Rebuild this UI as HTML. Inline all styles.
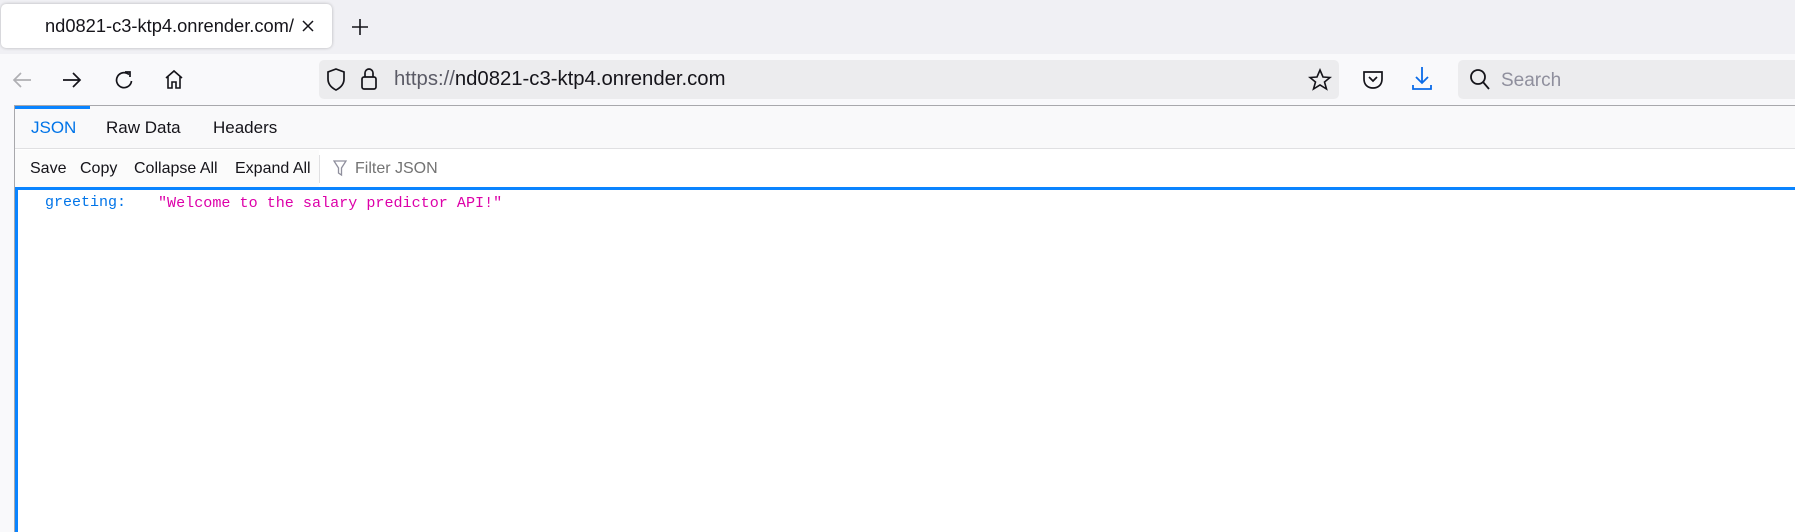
<!DOCTYPE html>
<html><head><meta charset="utf-8"><style>
*{margin:0;padding:0;box-sizing:border-box}
body{width:1795px;height:532px;overflow:hidden;background:#f9f9fb;font-family:"Liberation Sans",sans-serif;position:relative}
.a{position:absolute}
.tabs{left:0;top:0;width:1795px;height:54px;background:#f0f0f4}
.tab{left:1px;top:4px;width:331px;height:44px;background:#fff;border-radius:5px;box-shadow:0 0 3px rgba(0,0,0,.25)}
.t{font-size:17px;color:#15141a;white-space:nowrap}
.url{left:319px;top:60px;width:1020px;height:39px;background:#ececee;border-radius:5px}
.search{left:1458px;top:60px;width:337px;height:39px;background:#ececee;border-radius:5px 0 0 5px}
.panel{left:14px;top:105px;width:1781px;height:427px;background:#fff;border-top:1px solid #a8a8ac;border-left:1px solid #a8a8ac}
</style></head><body>
<div class="a tabs"></div>
<div class="a tab"></div>
<div class="a t" style="left:45px;top:15px;font-size:18.3px">nd0821-c3-ktp4.onrender.com/</div>
<svg class="a" style="left:302px;top:20px" width="12" height="12"><path d="M1 1L11 11M11 1L1 11" stroke="#15141a" stroke-width="1.5"/></svg>
<svg class="a" style="left:351px;top:18px" width="18" height="18"><path d="M9 1V17M1 9H17" stroke="#15141a" stroke-width="1.6"/></svg>
<svg class="a" style="left:12px;top:71px" width="20" height="18"><path d="M19 9H2M9 2L2 9L9 16" stroke="#b0b0b4" stroke-width="1.7" fill="none"/></svg>
<svg class="a" style="left:62px;top:71px" width="20" height="18"><path d="M1 9H18M11 2L18 9L11 16" stroke="#15141a" stroke-width="1.7" fill="none"/></svg>
<svg class="a" style="left:114px;top:70px" width="20" height="20"><path d="M15 4.5A7.5 7.5 0 1 0 17.5 11" stroke="#15141a" stroke-width="1.7" fill="none"/><path d="M11 2H16V7" stroke="#15141a" stroke-width="1.7" fill="none"/></svg>
<svg class="a" style="left:164px;top:69px" width="20" height="21"><path d="M2 9L10 2L18 9M4 7.5V19H8V13H12V19H16V7.5" stroke="#15141a" stroke-width="1.6" fill="none"/></svg>
<div class="a url"></div>
<svg class="a" style="left:326px;top:68px" width="20" height="23"><path d="M10 1L18 4V11C18 17 14 20 10 22C6 20 2 17 2 11V4Z" stroke="#15141a" stroke-width="1.7" fill="none"/></svg>
<svg class="a" style="left:360px;top:66px" width="18" height="25"><rect x="2" y="11" width="14" height="12" rx="2" stroke="#15141a" stroke-width="1.7" fill="none"/><path d="M5 11V7A4 4 0 0 1 13 7V11" stroke="#15141a" stroke-width="1.7" fill="none"/></svg>
<div class="a t" style="left:394px;top:68px;font-size:20.3px;color:#15141a"><span style="color:#5b5b66">https://</span>nd0821-c3-ktp4.onrender.com</div>
<svg class="a" style="left:1308px;top:68px" width="24" height="24"><path d="M12 2L15 9L22 9.5L16.5 14L18.5 21L12 17L5.5 21L7.5 14L2 9.5L9 9Z" stroke="#15141a" stroke-width="1.6" fill="none"/></svg>
<svg class="a" style="left:1362px;top:70px" width="22" height="20"><path d="M2 2H20V9C20 15 16 18 11 18C6 18 2 15 2 9Z" stroke="#15141a" stroke-width="1.7" fill="none"/><path d="M7 7L11 11L15 7" stroke="#15141a" stroke-width="1.7" fill="none"/></svg>
<svg class="a" style="left:1411px;top:66px" width="22" height="26"><path d="M11 1V17M5 11L11 17L17 11" stroke="#0a6be8" stroke-width="1.8" fill="none"/><path d="M2 19V23H20V19" stroke="#0a6be8" stroke-width="1.8" fill="none"/></svg>
<div class="a search"></div>
<svg class="a" style="left:1469px;top:68px" width="22" height="24"><circle cx="9" cy="9" r="7" stroke="#15141a" stroke-width="1.8" fill="none"/><path d="M14 14L20 21" stroke="#15141a" stroke-width="1.8"/></svg>
<div class="a t" style="left:1501px;top:70px;font-size:19px;color:#8f8f9d">Search</div>
<div class="a panel"></div>
<div class="a" style="left:15px;top:106px;width:1780px;height:43px;background:#f9f9fa;border-bottom:1px solid #e0e0e2"></div>
<div class="a" style="left:15px;top:106px;width:75px;height:3px;background:#0a84ff"></div>
<div class="a t" style="left:31px;top:118px;color:#0074e8">JSON</div>
<div class="a t" style="left:106px;top:118px">Raw Data</div>
<div class="a t" style="left:213px;top:118px">Headers</div>
<div class="a" style="left:15px;top:150px;width:1780px;height:37px;background:#fff"></div>
<div class="a" style="left:15px;top:150px;width:304px;height:37px;background:#fbfbfb"></div>
<div class="a t" style="left:30px;top:160px;font-size:16px">Save</div>
<div class="a t" style="left:80px;top:160px;font-size:16px">Copy</div>
<div class="a t" style="left:134px;top:160px;font-size:16px">Collapse All</div>
<div class="a t" style="left:235px;top:160px;font-size:16px">Expand All</div>
<div class="a" style="left:319px;top:155px;width:1px;height:28px;background:#e0e0e2"></div>
<svg class="a" style="left:333px;top:160px" width="14" height="17"><path d="M1 1H13L8.5 8V15L5.5 13V8Z" stroke="#8f8f9d" stroke-width="1.3" fill="none"/></svg>
<div class="a t" style="left:355px;top:160px;font-size:16px;color:#737373">Filter JSON</div>
<div class="a" style="left:15px;top:187px;width:1780px;height:3px;background:#0a84ff"></div>
<div class="a" style="left:15px;top:187px;width:3px;height:345px;background:#0a84ff"></div>
<div class="a" style="left:45px;top:194px;font-family:'Liberation Mono',monospace;font-size:15px;color:#0074e8;white-space:pre">greeting:</div>
<div class="a" style="left:158px;top:194px;font-family:'Liberation Mono',monospace;font-size:15.1px;color:#dd00a9;white-space:pre">"Welcome to the salary predictor API!"</div>
</body></html>
